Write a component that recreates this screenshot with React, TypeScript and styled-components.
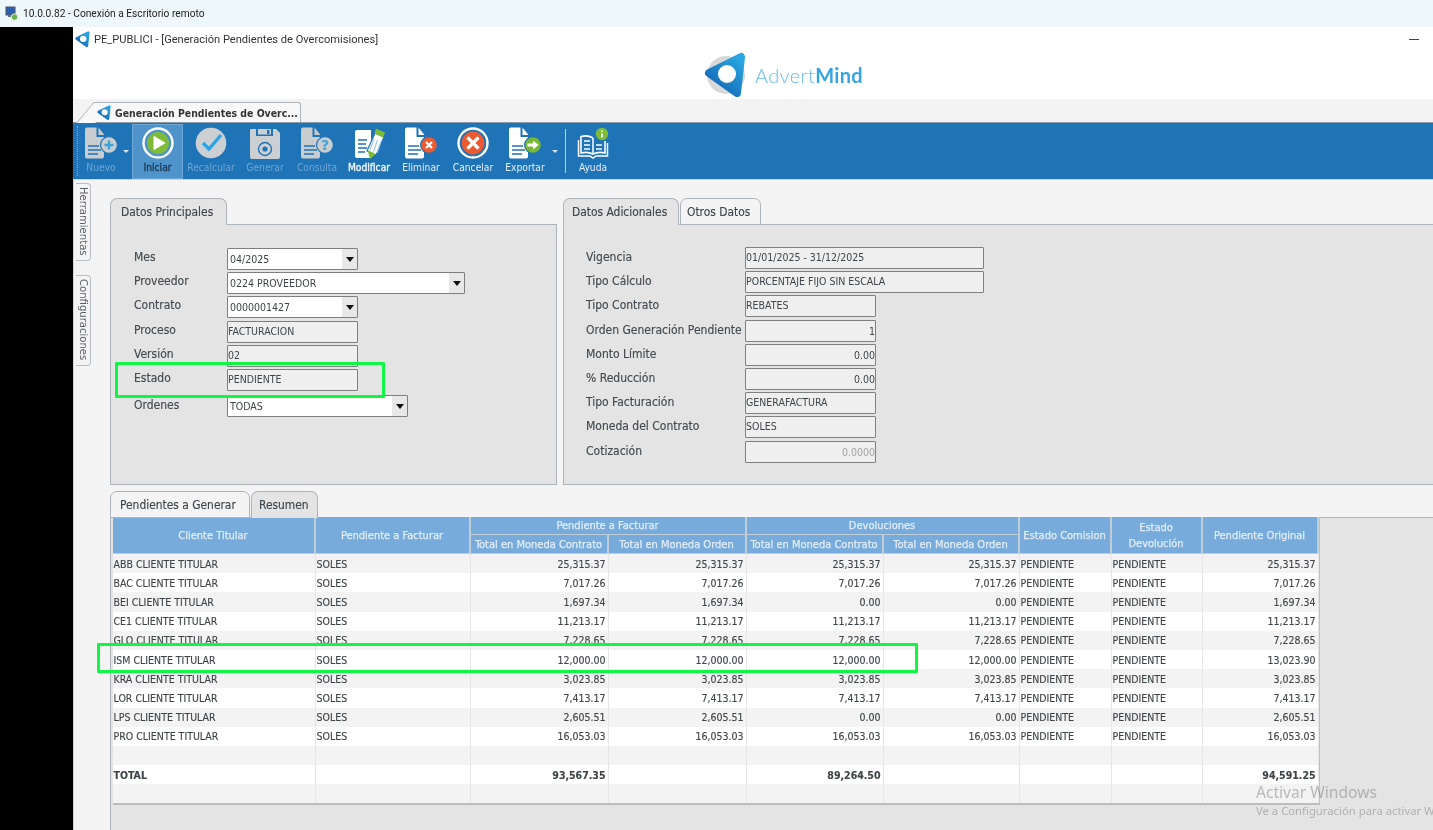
import React from "react";
import styled, { createGlobalStyle } from "styled-components";

const BLUE = "#1f73b7";
const FONT = `"DejaVu Sans Condensed", "DejaVu Sans", sans-serif`;

const Global = createGlobalStyle`
  html, body { margin: 0; padding: 0; background: #000; overflow: hidden; }
  * { box-sizing: border-box; }
`;

const Screen = styled.div`
  position: relative; width: 1433px; height: 830px; overflow: hidden;
  display: flex; flex-direction: column; font-family: ${FONT}; filter: blur(0.35px);
`;
const RemoteBar = styled.div`
  height: 27px; flex: none; background: #eef7fa; display: flex; align-items: center; gap: 5px; padding-left: 5px;
  font: 10.2px Roboto, sans-serif; color: #222;
  svg { flex: none; }
`;
const Body = styled.div`flex: 1; display: flex; min-height: 0;`;
const BlackColumn = styled.div`width: 73px; flex: none; background: #000;`;
const Main = styled.div`flex: 1; display: flex; flex-direction: column; min-width: 0; background: #f4f4f4;`;
const AppHeader = styled.div`height: 72px; flex: none; background: #fff; display: flex; flex-direction: column;`;
const TitleRow = styled.div`
  height: 24px; flex: none; display: flex; align-items: center; gap: 4px; padding: 0 14px 0 2px;
  font: 11.1px Roboto, sans-serif; color: #333;
  svg { flex: none; }
`;
const Minimize = styled.span`margin-left: auto; width: 10px; height: 1px; background: #444;`;
const LogoRow = styled.div`flex: 1; display: flex; align-items: flex-start; padding: 1px 0 0 631px; gap: 9px;`;
const Brand = styled.div`
  font: 300 20px Lato, sans-serif; color: #66bbea; line-height: 46px; letter-spacing: 0.35px;
  b { font-weight: 700; color: #35a4e2; }
`;
const TabStrip = styled.div`height: 23px; flex: none; padding: 3px 0 0 21px; background: #f3f3f3;`;
const DocTab = styled.div`
  position: relative; width: 207px; height: 20px; display: flex; align-items: center; gap: 4px; padding-left: 3px;
  background: #f8f8f8; border: 1px solid #aeb5ba; border-bottom: 0; border-left: 0; border-radius: 0 3px 0 0;
  font-weight: 700; font-size: 10.4px; color: #333; white-space: nowrap;
  svg { flex: none; }
  &::before {
    content: ""; position: absolute; left: -9px; top: -1px; width: 18px; height: 20px; z-index: 0;
    background: #f8f8f8; border-left: 1px solid #aeb5ba; border-top: 1px solid #aeb5ba; transform: skewX(-40deg);
  }
  & > * { position: relative; z-index: 1; }
`;
const Toolbar = styled.div`
  height: 58px; flex: none; display: flex; align-items: center; padding-left: 4px; background: ${BLUE};
  border-top: 1px solid #8d9ba7; border-bottom: 1px solid #c4d6e4;
`;
const Grip = styled.div`width: 1px; height: 50px; margin-right: 4px; border-left: 1px dotted #78aedb;`;
const ToolButton = styled.div<{ $w: number; $active?: boolean }>`
  width: ${(p) => p.$w}px; height: 55px; flex: none; display: flex; flex-direction: column; align-items: center; padding-top: 3px;
  background: ${(p) => (p.$active ? "#4f93cb" : "transparent")};
  box-shadow: ${(p) => (p.$active ? "inset 0 0 0 1px #6ba8d8" : "none")};
`;
const ToolLabel = styled.span<{ $tone: "off" | "on" | "strong" | "dark" }>`
  margin-top: 1px; font-size: 10.2px; line-height: 13px; white-space: nowrap;
  -webkit-text-stroke: ${(p) => (p.$tone === "strong" || p.$tone === "dark" ? "0.35px" : "0")};
  color: ${(p) => ({ off: "#6fa6d3", on: "#e4eff8", strong: "#f2f7fb", dark: "#1d3a54" })[p.$tone]};
`;
const Caret = styled.div<{ $w: number }>`
  width: ${(p) => p.$w}px; flex: none; display: flex; justify-content: center; padding-top: 1px;
  &::after { content: ""; border: 3px solid transparent; border-top: 3px solid #d5e3ef; border-bottom: 0; }
`;
const ToolSep = styled.div`width: 1px; height: 44px; margin: 0 5px 0 6px; background: #b8d3e8; flex: none;`;

const Content = styled.div`flex: 1; display: flex; min-height: 0;`;
const SideBar = styled.div`
  width: 37px; flex: none; display: flex; flex-direction: column; gap: 14px; padding: 3px 0 0 3px; background: #f4f4f4;
  border-left: 1px solid #c6d6e4;
`;
const SideTab = styled.div<{ $h: number }>`
  width: 15px; height: ${(p) => p.$h}px; writing-mode: vertical-rl; padding: 3px 0 0 0; margin-left: -1px;
  border: 1px solid #b9c0c5; border-left: 0; border-radius: 0 4px 4px 0;
  font-size: 11.2px; line-height: 13px; color: #5a6268; white-space: nowrap; overflow: hidden;
`;
const Work = styled.div`flex: 1; display: flex; flex-direction: column; padding-top: 18px; min-width: 0;`;
const TopRow = styled.div`height: 287px; flex: none; display: flex; gap: 6px;`;
const Panel = styled.div<{ $w?: number }>`
  display: flex; flex-direction: column;
  ${(p) => (p.$w ? `width: ${p.$w}px; flex: none;` : "flex: 1; min-width: 0;")}
`;
const Tabs = styled.div`height: 26px; flex: none; display: flex; gap: 1px;`;
const Tab = styled.div<{ $w: number; $pad: number; $active?: boolean }>`
  width: ${(p) => p.$w}px; height: 27px; padding-left: ${(p) => p.$pad}px; display: flex; align-items: center; position: relative; z-index: 1;
  background: ${(p) => (p.$active ? "#e4e4e4" : "#f4f4f4")};
  border: 1.5px solid #aeb5ba; border-radius: 7px 7px 0 0;
  border-bottom-color: ${(p) => (p.$active ? "#e4e4e4" : "#aeb5ba")};
  font-size: 11.9px; color: #3d474d; white-space: nowrap; -webkit-text-stroke: 0.15px;
`;
const FormBody = styled.div<{ $pad: number; $right?: boolean }>`
  flex: 1; display: flex; flex-direction: column; gap: 2.2px; background: #e4e4e4;
  border: 1.5px solid #aeb5ba; ${(p) => (p.$right ? "border-right: 0;" : "")}
  padding: ${(p) => p.$pad - 1}px 0 0 ${(p) => p.$pad - 1}px;
`;
const FormRow = styled.div<{ $top?: number }>`height: 22px; flex: none; display: flex; align-items: flex-start; margin-top: ${(p) => p.$top ?? 0}px;`;
const FieldLabel = styled.span<{ $w: number; $nudge?: number }>`
  width: ${(p) => p.$w}px; flex: none; font-size: 12px; line-height: 18px; color: #434a4f; white-space: nowrap;
  padding-top: ${(p) => p.$nudge ?? 0}px; -webkit-text-stroke: 0.15px;
`;
const Field = styled.div<{ $w: number; $open?: boolean; $right?: boolean; $dim?: boolean }>`
  width: ${(p) => p.$w}px; height: 22px; flex: none; display: flex; align-items: center;
  justify-content: ${(p) => (p.$right ? "flex-end" : "space-between")};
  background: ${(p) => (p.$open ? "#fff" : "#efefef")};
  border: 1.5px solid #7f7f7f; border-radius: 1px; font-size: 10.5px;
  color: ${(p) => (p.$dim ? "#a3a3a3" : "#3f4549")};
  padding: 0 0 ${(p) => (p.$open || p.$right ? 0 : 2)}px ${(p) => (p.$open ? 2 : 0)}px; white-space: nowrap;
`;
const DropButton = styled.span`
  width: 15px; align-self: stretch; flex: none; background: #e8e8e8; display: flex; align-items: center; justify-content: center;
  &::after { content: ""; border: 4px solid transparent; border-top: 5px solid #111; border-bottom: 0; }
`;
const Lower = styled.div`flex: 1; display: flex; flex-direction: column; margin-top: 6px; min-height: 0;`;
const GridArea = styled.div`flex: 1; background: #e4e4e4; border-left: 1.5px solid #aeb5ba; border-top: 1.5px solid #aeb5ba; padding: 0 0 0 1px;`;
const Grid = styled.table`
  width: 1206px; table-layout: fixed; border-collapse: separate; border-spacing: 0; font-size: 10.5px; color: #3e4448;
  border-right: 1.5px solid #c2c2c2; border-bottom: 2px solid #bcbcbc; margin: -1px 0 0 0.5px;
`;
const HeadCell = styled.th<{ $h?: number; $shift?: number }>`
  background: #77abdb; color: #e3edf6; font-weight: 400; font-size: 11px; line-height: 16px; padding: ${(p) => p.$shift ?? 1}px 0 0;
  border-right: 2px solid #c0cdd6; border-bottom: 1.5px solid #c0cdd6; height: ${(p) => p.$h ?? 19}px;
  white-space: normal; text-align: center; -webkit-text-stroke: 0.25px #e3edf6;
`;
const Row = styled.tr<{ $odd: boolean }>`
  height: 19.2px; background: ${(p) => (p.$odd ? "#f3f3f3" : "#fff")};
`;
const Cell = styled.td<{ $num?: boolean; $bold?: boolean }>`
  padding: 0 ${(p) => (p.$num ? 2 : 1)}px 0 ${(p) => (p.$num ? 0 : 1)}px; text-align: ${(p) => (p.$num ? "right" : "left")};
  font-weight: ${(p) => (p.$bold ? 700 : 400)}; border-right: 1px solid #e6e6e6; white-space: nowrap; overflow: hidden;
  -webkit-text-stroke: 0.12px;
`;
const Highlight = styled.div<{ $x: number; $y: number; $w: number; $h: number }>`
  position: absolute; left: ${(p) => p.$x}px; top: ${(p) => p.$y}px; width: ${(p) => p.$w}px; height: ${(p) => p.$h}px;
  border: 3px solid #10f645; border-radius: 1px;
`;
const Watermark = styled.div`
  position: absolute; left: 1256px; top: 782px; white-space: nowrap; font-family: "Noto Sans", sans-serif; color: rgba(125,125,125,.5);
  line-height: 20px; font-size: 15.6px;
  small { display: block; font-size: 11.3px; line-height: 15px; margin-top: 1px; }
`;

const LogoMark = ({ size, ring }: { size: number; ring?: boolean }) => (
  <svg width={size} height={size * 46 / 42} viewBox="0 0 42 46">
    <defs>
      <linearGradient id="logoGrad" x1="0.9" y1="0" x2="0.1" y2="1">
        <stop offset="0" stopColor="#2aa6e2" />
        <stop offset="1" stopColor="#1263b0" />
      </linearGradient>
    </defs>
    {ring && <circle cx="22" cy="23" r="19" fill="#d8d8d8" />}
    <path d="M5 21 L37 5 L33 41 Z" fill="url(#logoGrad)" stroke="url(#logoGrad)" strokeWidth="8" strokeLinejoin="round" />
    <circle cx="23" cy="22" r="9" fill="#fff" />
  </svg>
);

const RdpIcon = () => (
  <svg width="13" height="15" viewBox="0 0 13 15">
    <rect x="1" y="1" width="9" height="8" fill="#2c5fb0" stroke="#4a5568" />
    <rect x="3" y="9" width="5" height="2" fill="#6b7280" />
    <circle cx="9.5" cy="11" r="3.2" fill="#69b34c" stroke="#e6e6e6" />
  </svg>
);

const Doc = ({ color, children }: { color: string; children?: React.ReactNode }) => (
  <svg width="34" height="33" viewBox="0 0 34 33">
    <path d="M3 0.5 H12.5 V10 H20 V29.5 a2 2 0 0 1-2 2 H3 a2 2 0 0 1-2-2 V2.5 a2 2 0 0 1 2-2z" fill={color} />
    <path d="M14.5 0.5 L20.5 8 H14.5z" fill={color} />
    <path d="M4 19 H15 M4 23 H17 M4 27 H14" stroke={BLUE} strokeWidth="1.6" />
    {children}
  </svg>
);

const Badge = ({ fill }: { fill: string }) => <circle cx="25" cy="18" r="8.4" fill={fill} stroke={BLUE} strokeWidth="1.2" />;

const NewIcon = () => (
  <Doc color="#c9cdd0">
    <Badge fill="#c9cdd0" />
    <circle cx="25" cy="18" r="6" fill="#c9cdd0" />
    <path d="M25 13.5 V22.5 M20.5 18 H29.5" stroke="#37a3df" strokeWidth="2.4" />
  </Doc>
);
const QueryIcon = () => (
  <Doc color="#c9cdd0">
    <Badge fill="#c9cdd0" />
    <text x="25" y="23" textAnchor="middle" fontSize="14" fontWeight="700" fontFamily="DejaVu Sans" fill="#37a3df">?</text>
  </Doc>
);
const DeleteIcon = () => (
  <Doc color="#fff">
    <Badge fill="#ec5a32" />
    <path d="M22 15 L28 21 M28 15 L22 21" stroke="#fff" strokeWidth="2.2" />
  </Doc>
);
const ExportIcon = () => (
  <Doc color="#fff">
    <Badge fill="#78b835" />
    <path d="M19.5 16.5 H25 V13.5 L30.5 18 L25 22.5 V19.5 H19.5z" fill="#fff" />
  </Doc>
);
const PlayIcon = () => (
  <svg width="34" height="33" viewBox="0 0 34 33">
    <circle cx="17" cy="16" r="14.5" fill="none" stroke="#fff" strokeWidth="2.4" />
    <circle cx="17" cy="16" r="11" fill="#7fbb38" />
    <path d="M13 9.5 L24 16 L13 22.5z" fill="#fff" strokeLinejoin="round" stroke="#fff" />
  </svg>
);
const CheckIcon = () => (
  <svg width="34" height="33" viewBox="0 0 34 33">
    <circle cx="17" cy="16" r="15.3" fill="#cdd0d2" />
    <path d="M9 16 L15 22 L27 8" fill="none" stroke="#2ea4e4" strokeWidth="3.4" />
  </svg>
);
const SaveIcon = () => (
  <svg width="34" height="33" viewBox="0 0 34 33">
    <path d="M3 2 H8 V9 H25 V2 H28 L32 6 V30 a2 2 0 0 1-2 2 H4 a2 2 0 0 1-2-2 V3z" fill="#cdd0d2" />
    <path d="M10 2 H23 V7.5 H10z" fill="#cdd0d2" />
    <path d="M19 3 H21.5 V7 H19z" fill={BLUE} />
    <circle cx="17" cy="22" r="6.5" fill="none" stroke={BLUE} strokeWidth="1.4" />
    <circle cx="17" cy="22" r="2.6" fill={BLUE} />
  </svg>
);
const EditIcon = () => (
  <svg width="34" height="33" viewBox="0 0 34 33">
    <path d="M5 3 H19 V31 H5 a2 2 0 0 1-2-2 V5 a2 2 0 0 1 2-2z" fill="#fff" />
    <path d="M6 13 H15 M6 17 H14 M6 21 H15 M6 25 H13" stroke={BLUE} strokeWidth="1.5" />
    <path d="M23 6 L32 10 L24 28 L15 24z" fill="#fff" stroke={BLUE} strokeWidth="1.2" />
    <path d="M22 12 L18 23 M25.5 13 L21.5 24.5 M29 14.5 L25 26" stroke="#a5c8e3" strokeWidth="1.2" />
    <path d="M24 1.5 L33 5.5 L31 10.5 L22.5 6.5z" fill="#7ebb37" />
    <path d="M15.5 23 L24 27 L18 32z" fill="#7ebb37" />
  </svg>
);
const CancelIcon = () => (
  <svg width="34" height="33" viewBox="0 0 34 33">
    <circle cx="17" cy="16" r="14.5" fill="none" stroke="#fff" strokeWidth="2.4" />
    <circle cx="17" cy="16" r="11.4" fill="#ec5a32" />
    <path d="M11.5 10.5 L22.5 21.5 M22.5 10.5 L11.5 21.5" stroke="#fff" strokeWidth="3.2" />
  </svg>
);
const HelpIcon = () => (
  <svg width="34" height="33" viewBox="0 0 34 33">
    <path d="M17 11 C13 8.5 9 8.5 5 9.5 V26 C9 25 13 25 17 27 C21 25 25 25 29 26 V14" fill="none" stroke="#fff" strokeWidth="1.6" />
    <path d="M17 11 V27 M8 14 H14 M8 18 H14 M8 22 H14 M20 18 H26 M20 22 H26" stroke="#fff" strokeWidth="1.5" />
    <path d="M2.5 13 V29 H14 L17 31 L20 29 H31.5 V16" fill="none" stroke="#fff" strokeWidth="1.5" />
    <circle cx="26" cy="7" r="6.2" fill="#7ebb37" />
    <path d="M26 3.5 V5 M26 6.5 V10.5" stroke="#fff" strokeWidth="1.7" />
  </svg>
);

const leftForm: { label: string; value: string; w: number; open?: boolean; top?: number; nudge?: number }[] = [
  { label: "Mes", value: "04/2025", w: 131, open: true },
  { label: "Proveedor", value: "0224 PROVEEDOR", w: 238, open: true },
  { label: "Contrato", value: "0000001427", w: 131, open: true },
  { label: "Proceso", value: "FACTURACION", w: 131 },
  { label: "Versión", value: "02", w: 131 },
  { label: "Estado", value: "PENDIENTE", w: 131 },
  { label: "Ordenes", value: "TODAS", w: 181, open: true, top: 2, nudge: 1 },
];
const rightForm: { label: string; value: string; w: number; right?: boolean; dim?: boolean }[] = [
  { label: "Vigencia", value: "01/01/2025 - 31/12/2025", w: 239 },
  { label: "Tipo Cálculo", value: "PORCENTAJE FIJO SIN ESCALA", w: 239 },
  { label: "Tipo Contrato", value: "REBATES", w: 131 },
  { label: "Orden Generación Pendiente", value: "1", w: 131, right: true },
  { label: "Monto Límite", value: "0.00", w: 131, right: true },
  { label: "% Reducción", value: "0.00", w: 131, right: true },
  { label: "Tipo Facturación", value: "GENERAFACTURA", w: 131 },
  { label: "Moneda del Contrato", value: "SOLES", w: 131 },
  { label: "Cotización", value: "0.0000", w: 131, right: true, dim: true },
];

const colWidths = [203, 155, 138, 138, 137, 136, 92, 91, 116];
type Rec = [string, string, string, string, string, string];
const records: Rec[] = [
  ["ABB", "25,315.37", "25,315.37", "25,315.37", "25,315.37", "25,315.37"],
  ["BAC", "7,017.26", "7,017.26", "7,017.26", "7,017.26", "7,017.26"],
  ["BEI", "1,697.34", "1,697.34", "0.00", "0.00", "1,697.34"],
  ["CE1", "11,213.17", "11,213.17", "11,213.17", "11,213.17", "11,213.17"],
  ["GLO", "7,228.65", "7,228.65", "7,228.65", "7,228.65", "7,228.65"],
  ["ISM", "12,000.00", "12,000.00", "12,000.00", "12,000.00", "13,023.90"],
  ["KRA", "3,023.85", "3,023.85", "3,023.85", "3,023.85", "3,023.85"],
  ["LOR", "7,413.17", "7,413.17", "7,413.17", "7,413.17", "7,413.17"],
  ["LPS", "2,605.51", "2,605.51", "0.00", "0.00", "2,605.51"],
  ["PRO", "16,053.03", "16,053.03", "16,053.03", "16,053.03", "16,053.03"],
];

const EmptyRow = ({ odd }: { odd: boolean }) => (
  <Row $odd={odd}>{colWidths.map((_, i) => <Cell key={i}>&nbsp;</Cell>)}</Row>
);

export default function App() {
  return (
    <>
      <Global />
      <Screen>
        <RemoteBar><RdpIcon />10.0.0.82 - Conexión a Escritorio remoto</RemoteBar>
        <Body>
          <BlackColumn />
          <Main>
            <AppHeader>
              <TitleRow>
                <LogoMark size={15} />
                PE_PUBLICI - [Generación Pendientes de Overcomisiones]
                <Minimize />
              </TitleRow>
              <LogoRow>
                <LogoMark size={42} ring />
                <Brand>Advert<b>Mind</b></Brand>
              </LogoRow>
            </AppHeader>
            <TabStrip>
              <DocTab><LogoMark size={14} /><span>Generación Pendientes de Overc...</span></DocTab>
            </TabStrip>
            <Toolbar>
              <Grip />
              <ToolButton $w={38}><NewIcon /><ToolLabel $tone="off">Nuevo</ToolLabel></ToolButton>
              <Caret $w={12} />
              <ToolButton $w={51} $active><PlayIcon /><ToolLabel $tone="dark">Iniciar</ToolLabel></ToolButton>
              <ToolButton $w={56}><CheckIcon /><ToolLabel $tone="off">Recalcular</ToolLabel></ToolButton>
              <ToolButton $w={52}><SaveIcon /><ToolLabel $tone="off">Generar</ToolLabel></ToolButton>
              <ToolButton $w={52}><QueryIcon /><ToolLabel $tone="off">Consulta</ToolLabel></ToolButton>
              <ToolButton $w={52}><EditIcon /><ToolLabel $tone="strong">Modificar</ToolLabel></ToolButton>
              <ToolButton $w={52}><DeleteIcon /><ToolLabel $tone="on">Eliminar</ToolLabel></ToolButton>
              <ToolButton $w={52}><CancelIcon /><ToolLabel $tone="on">Cancelar</ToolLabel></ToolButton>
              <ToolButton $w={52}><ExportIcon /><ToolLabel $tone="on">Exportar</ToolLabel></ToolButton>
              <Caret $w={8} />
              <ToolSep />
              <ToolButton $w={44}><HelpIcon /><ToolLabel $tone="on">Ayuda</ToolLabel></ToolButton>
            </Toolbar>
            <Content>
              <SideBar>
                <SideTab $h={78}>Herramientas</SideTab>
                <SideTab $h={91}>Configuraciones</SideTab>
              </SideBar>
              <Work>
                <TopRow>
                  <Panel $w={447}>
                    <Tabs><Tab $w={117} $pad={10} $active>Datos Principales</Tab></Tabs>
                    <FormBody $pad={24}>
                      {leftForm.map((f) => (
                        <FormRow key={f.label} $top={f.top}>
                          <FieldLabel $w={93} $nudge={f.nudge}>{f.label}</FieldLabel>
                          <Field $w={f.w} $open={f.open}>
                            <span>{f.value}</span>
                            {f.open && <DropButton />}
                          </Field>
                        </FormRow>
                      ))}
                    </FormBody>
                  </Panel>
                  <Panel>
                    <Tabs>
                      <Tab $w={116} $pad={8} $active>Datos Adicionales</Tab>
                      <Tab $w={81} $pad={6}>Otros Datos</Tab>
                    </Tabs>
                    <FormBody $pad={23} $right>
                      {rightForm.map((f) => (
                        <FormRow key={f.label}>
                          <FieldLabel $w={159} $nudge={1}>{f.label}</FieldLabel>
                          <Field $w={f.w} $right={f.right} $dim={f.dim}>{f.value}</Field>
                        </FormRow>
                      ))}
                    </FormBody>
                  </Panel>
                </TopRow>
                <Lower>
                  <Tabs>
                    <Tab $w={140} $pad={9}>Pendientes a Generar</Tab>
                    <Tab $w={67} $pad={7} $active>Resumen</Tab>
                  </Tabs>
                  <GridArea>
                    <Grid>
                      <colgroup>{colWidths.map((w, i) => <col key={i} width={w} />)}</colgroup>
                      <thead>
                        <tr>
                          <HeadCell rowSpan={2}>Cliente Titular</HeadCell>
                          <HeadCell rowSpan={2}>Pendiente a Facturar</HeadCell>
                          <HeadCell colSpan={2} $h={18}>Pendiente a Facturar</HeadCell>
                          <HeadCell colSpan={2} $h={18}>Devoluciones</HeadCell>
                          <HeadCell rowSpan={2}>Estado Comision</HeadCell>
                          <HeadCell rowSpan={2}>Estado<br />Devolución</HeadCell>
                          <HeadCell rowSpan={2}>Pendiente Original</HeadCell>
                        </tr>
                        <tr>
                          <HeadCell $h={19} $shift={2}>Total en Moneda Contrato</HeadCell>
                          <HeadCell $h={19} $shift={2}>Total en Moneda Orden</HeadCell>
                          <HeadCell $h={19} $shift={2}>Total en Moneda Contrato</HeadCell>
                          <HeadCell $h={19} $shift={2}>Total en Moneda Orden</HeadCell>
                        </tr>
                      </thead>
                      <tbody>
                        {records.map((r, i) => (
                          <Row key={r[0]} $odd={i % 2 === 0}>
                            <Cell>{r[0]} CLIENTE TITULAR</Cell>
                            <Cell>SOLES</Cell>
                            <Cell $num>{r[1]}</Cell>
                            <Cell $num>{r[2]}</Cell>
                            <Cell $num>{r[3]}</Cell>
                            <Cell $num>{r[4]}</Cell>
                            <Cell>PENDIENTE</Cell>
                            <Cell>PENDIENTE</Cell>
                            <Cell $num>{r[5]}</Cell>
                          </Row>
                        ))}
                        <EmptyRow odd />
                        <Row $odd={false}>
                          <Cell $bold>TOTAL</Cell>
                          <Cell />
                          <Cell $num $bold>93,567.35</Cell>
                          <Cell />
                          <Cell $num $bold>89,264.50</Cell>
                          <Cell />
                          <Cell />
                          <Cell />
                          <Cell $num $bold>94,591.25</Cell>
                        </Row>
                        <EmptyRow odd />
                      </tbody>
                    </Grid>
                  </GridArea>
                </Lower>
              </Work>
            </Content>
          </Main>
        </Body>
        <Highlight $x={115} $y={362} $w={270} $h={36} />
        <Highlight $x={97} $y={643} $w={821} $h={30} />
        <Watermark>Activar Windows<small>Ve a Configuración para activar Windows.</small></Watermark>
      </Screen>
    </>
  );
}
